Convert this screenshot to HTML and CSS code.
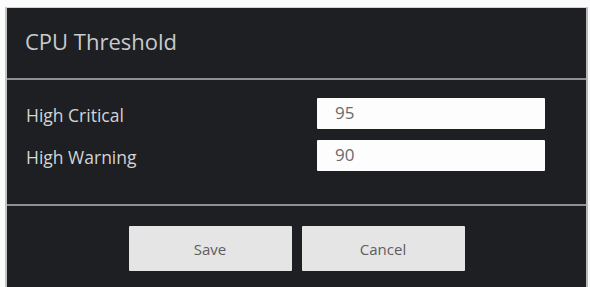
FILE: index.html
```html
<!DOCTYPE html>
<html>
<head>
<meta charset="utf-8">
<link rel="stylesheet" href="styles.css">
</head>
<body>
<div class="page">
  <div class="dialog">
    <div class="header">CPU Threshold</div>
    <div class="body">
      <div class="row">
        <span class="label">High Critical</span>
        <div class="input">95</div>
      </div>
      <div class="row">
        <span class="label">High Warning</span>
        <div class="input">90</div>
      </div>
    </div>
    <div class="footer">
      <button class="btn">Save</button>
      <button class="btn">Cancel</button>
    </div>
  </div>
</div>
</body>
</html>
```

FILE: styles.css
```css
html, body {
  margin: 0;
  padding: 0;
  background: #fbfbfb;
  width: 590px;
  height: 287px;
  overflow: hidden;
}
.page {
  padding: 7px 1px 0 5px;
  height: 280px;
  overflow: hidden;
}
.dialog {
  width: 579px;
  background: #1d1f23;
  border-left: 2px solid #c4c4c4;
  border-right: 2px solid #b8b8b8;
  border-top: 1px solid #d4d4d4;
  font-family: "Open Sans", "Noto Sans", sans-serif;
  height: 300px;
}
.header {
  height: 72px;
  box-sizing: border-box;
  padding: 18px 0 0 18px;
  font-size: 22px;
  color: #c8cacd;
  border-bottom: 2px solid #8e9094;
}
.body {
  height: 126px;
  box-sizing: border-box;
  padding: 18px 41px 0 19px;
  display: flex;
  flex-direction: column;
  gap: 11px;
  border-bottom: 2px solid #8e9094;
}
.row {
  display: flex;
  align-items: center;
  justify-content: space-between;
  height: 31px;
}
.label {
  color: #d2d4d6;
  font-size: 17.5px;
  padding-top: 3px;
}
.input {
  width: 228px;
  height: 31px;
  box-sizing: border-box;
  background: #fdfdfd;
  border-radius: 1px;
  color: #6a6a6a;
  font-size: 17px;
  padding: 3px 0 0 18px;
}
.footer {
  display: flex;
  justify-content: center;
  gap: 10px;
  padding-top: 20px;
}
.btn {
  width: 163px;
  height: 45px;
  background: #e5e5e5;
  border: none;
  border-radius: 1px;
  color: #5e5e5e;
  font-family: "Open Sans", "Noto Sans", sans-serif;
  font-size: 15px;
  padding: 0;
}
```
